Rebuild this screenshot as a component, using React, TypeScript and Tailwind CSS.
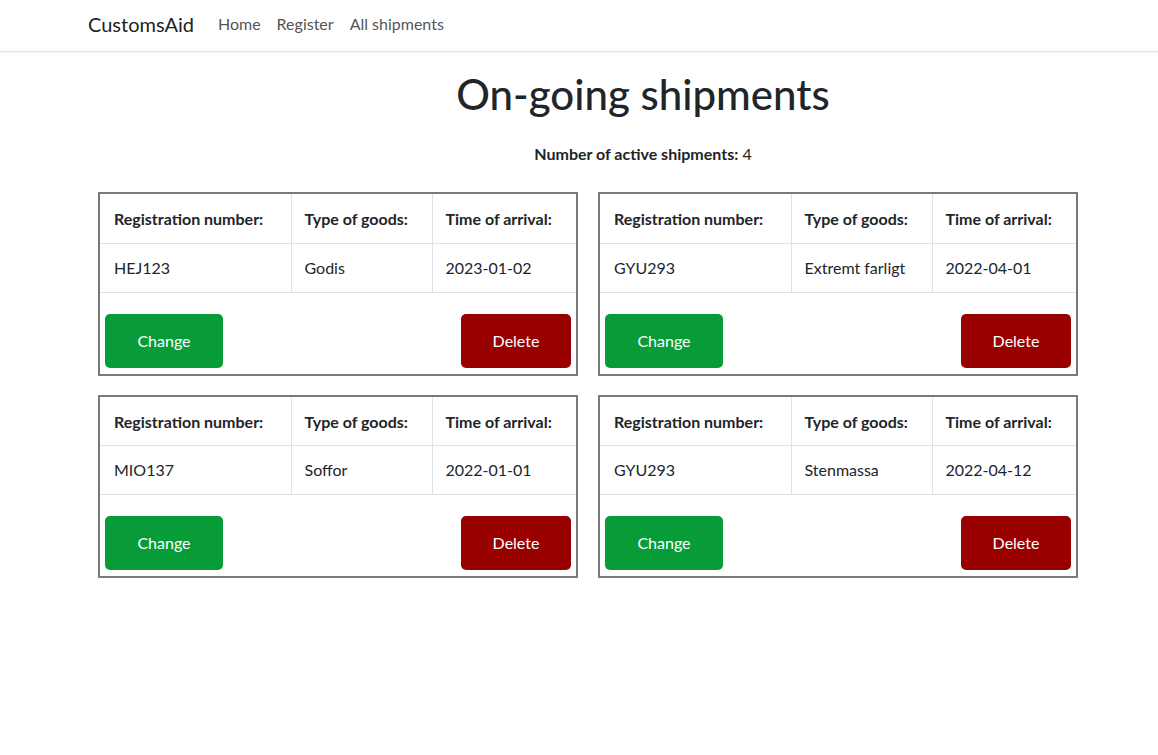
import React from 'react';

const shipments = [
  { id: 1, reg: 'HEJ123', goods: 'Godis', arrival: '2023-01-02' },
  { id: 2, reg: 'GYU293', goods: 'Extremt farligt', arrival: '2022-04-01' },
  { id: 3, reg: 'MIO137', goods: 'Soffor', arrival: '2022-01-01' },
  { id: 4, reg: 'GYU293', goods: 'Stenmassa', arrival: '2022-04-12' },
];

function ShipmentCard({ reg, goods, arrival }: { reg: string; goods: string; arrival: string }) {
  return (
    <div className="w-[480px] border-2 border-[#7a7a7a] bg-white">
      <table className="w-full border-collapse text-[16px] text-[#212529]">
        <thead>
          <tr className="h-[49px] border-b border-[#dee2e6]">
            <th className="w-[191px] border-r border-[#dee2e6] pl-[14px] pt-[2px] text-left font-bold">Registration number:</th>
            <th className="w-[141px] border-r border-[#dee2e6] pl-[13px] pt-[2px] text-left font-bold">Type of goods:</th>
            <th className="pl-[13px] pt-[2px] text-left font-bold">Time of arrival:</th>
          </tr>
        </thead>
        <tbody>
          <tr className="h-[49px] border-b border-[#dee2e6]">
            <td className="border-r border-[#dee2e6] pl-[14px]">{reg}</td>
            <td className="border-r border-[#dee2e6] pl-[13px]">{goods}</td>
            <td className="pl-[13px]">{arrival}</td>
          </tr>
        </tbody>
      </table>
      <div className="flex justify-between px-[5px] pt-[21px] pb-[6px]">
        <button className="h-[54px] w-[118px] rounded-[5px] bg-[#089c38] text-[16px] text-white">Change</button>
        <button className="h-[54px] w-[110px] rounded-[5px] bg-[#990000] text-[16px] text-white">Delete</button>
      </div>
    </div>
  );
}

export default function App() {
  return (
    <div className="min-h-[755px] bg-white font-['Lato','Open_Sans',sans-serif] text-[#212529]">
      <nav className="flex h-[52px] items-center border-b border-[#e3e3e3] pb-[4px] pl-[88px] shadow-[0_1px_3px_rgba(0,0,0,0.06)]">
        <span className="mr-[24px] text-[20px] text-[#222]">CustomsAid</span>
        <a className="mr-[16px] text-[16px] text-[#555]" href="#">Home</a>
        <a className="mr-[16px] text-[16px] text-[#555]" href="#">Register</a>
        <a className="text-[16px] text-[#555]" href="#">All shipments</a>
      </nav>
      <div className="pl-[128px] text-center">
        <h1 className="mt-[18px] text-[42px] font-medium leading-[48px]">On-going shipments</h1>
        <p className="mt-[24px] text-[16px]">
          <span className="font-bold">Number of active shipments:</span> 4
        </p>
      </div>
      <div className="mt-[26px] ml-[98px] grid w-[980px] grid-cols-2 gap-x-[20px] gap-y-[19px]">
        {shipments.map((s) => (
          <ShipmentCard key={s.id} reg={s.reg} goods={s.goods} arrival={s.arrival} />
        ))}
      </div>
    </div>
  );
}
